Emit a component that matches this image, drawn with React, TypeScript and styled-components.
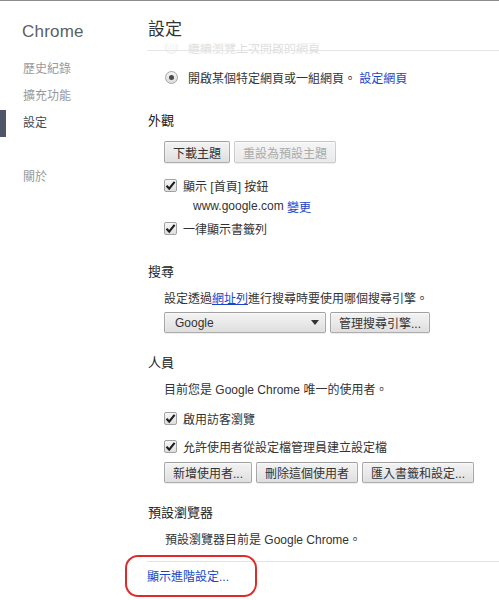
import React from "react";
import styled, { createGlobalStyle, css } from "styled-components";

const GlobalStyle = createGlobalStyle`
  html, body { margin: 0; padding: 0; background: #fff; }
  body {
    font-family: "Liberation Sans", "Noto Sans CJK TC", sans-serif;
    font-size: 12px;
    color: #303942;
  }
  * { box-sizing: border-box; }
`;

const FONT = `"Liberation Sans", "Noto Sans CJK TC", sans-serif`;

const Page = styled.div`
  width: 499px;
  height: 600px;
  overflow: hidden;
  border-top: 1px solid #8c8c8c;
  display: flex;
  background: #fff;
`;

const Sidebar = styled.nav`
  width: 147px;
  flex: none;
  padding-top: 21px;
  display: flex;
  flex-direction: column;
`;

const Brand = styled.div`
  height: 20px;
  line-height: 20px;
  padding-left: 22px;
  font-size: 17px;
  color: #5a5f66;
  font-family: ${FONT};
  letter-spacing: 0.2px;
`;

const NavList = styled.ul`
  list-style: none;
  margin: 14px 0 0;
  padding: 0;
`;

const NavItem = styled.li<{ $active?: boolean; $gapBefore?: boolean }>`
  height: 27px;
  line-height: 27px;
  font-size: 12px;
  padding-left: 23px;
  color: #999;
  margin-top: ${(p) => (p.$gapBefore ? "27px" : "0")};
  ${(p) =>
    p.$active &&
    css`
      color: #444a53;
      border-left: 6px solid #4e5668;
      padding-left: 17px;
    `}
`;

const Main = styled.main`
  position: relative;
  flex: 1;
  min-width: 0;
  padding-top: 36px;
`;

const HeaderOverlay = styled.header`
  position: absolute;
  top: 0;
  left: 0;
  right: 0;
  height: 54px;
  padding-top: 19px;
  background:
    linear-gradient(#e6e6e6, #e6e6e6) 0 49px / 100% 1px no-repeat,
    linear-gradient(
      to bottom,
      #fff 0,
      #fff 42px,
      rgba(255, 255, 255, 0.8) 43px,
      rgba(255, 255, 255, 0.8) 54px
    );
  z-index: 2;
`;

const PageTitle = styled.h1`
  margin: 0;
  padding-left: 1px;
  height: 20px;
  line-height: 20px;
  font-size: 17px;
  font-weight: normal;
  color: #333;
`;

const Row = styled.div<{ $mt?: number; $indent?: number; $h?: number }>`
  display: flex;
  align-items: center;
  height: ${(p) => p.$h ?? 20}px;
  margin-top: ${(p) => p.$mt ?? 0}px;
  padding-left: ${(p) => p.$indent ?? 17}px;
  font-size: 12px;
  color: #333;
  white-space: nowrap;
`;

const SectionTitle = styled.h3<{ $mt: number }>`
  margin: ${(p) => p.$mt}px 0 0;
  padding-left: 1px;
  height: 20px;
  line-height: 20px;
  font-size: 13px;
  font-weight: normal;
  color: #222;
`;

const Link = styled.a<{ $underline?: boolean }>`
  color: #1a45c8;
  text-decoration: ${(p) => (p.$underline ? "underline" : "none")};
  cursor: pointer;
`;

const RadioCircle = styled.span<{ $checked?: boolean }>`
  width: 13px;
  height: 13px;
  flex: none;
  border-radius: 50%;
  border: 1px solid #a6a6a6;
  background: linear-gradient(#f4f4f4, #dcdcdc);
  display: flex;
  align-items: center;
  justify-content: center;
  margin-right: 10px;
  &::after {
    content: "";
    width: 5px;
    height: 5px;
    border-radius: 50%;
    background: ${(p) => (p.$checked ? "#4a4a4a" : "transparent")};
  }
`;

const Box = styled.span`
  width: 13px;
  height: 13px;
  flex: none;
  border: 1px solid #a2a2a2;
  border-radius: 2px;
  background: linear-gradient(#f6f6f6, #dedede);
  display: flex;
  align-items: center;
  justify-content: center;
  margin-right: 6px;
`;

const Checkbox = () => (
  <Box>
    <svg width="11" height="11" viewBox="0 0 11 11">
      <path d="M1.5 5.8 L4.2 8.6 L9.6 1.8" fill="none" stroke="#1e1e1e" strokeWidth="2.1" />
    </svg>
  </Box>
);

const ButtonRow = styled.div<{ $mt: number; $h: number }>`
  display: flex;
  gap: 4px;
  margin-top: ${(p) => p.$mt}px;
  height: ${(p) => p.$h}px;
  padding-left: 17px;
`;

const Button = styled.button<{ $disabled?: boolean }>`
  height: 100%;
  padding: 0 8px;
  font-family: ${FONT};
  font-size: 12px;
  color: ${(p) => (p.$disabled ? "#aaa" : "#333")};
  border: 1px solid ${(p) => (p.$disabled ? "rgba(0,0,0,0.15)" : "rgba(0,0,0,0.28)")};
  border-radius: 2px;
  background: ${(p) =>
    p.$disabled
      ? "linear-gradient(#f5f5f5, #f1f1f1 40%, #e9e9e9)"
      : "linear-gradient(#f1f1f1, #ececec 40%, #dedede)"};
  box-shadow: 0 1px 0 rgba(0, 0, 0, 0.07), inset 0 1px 2px rgba(255, 255, 255, 0.75);
  white-space: nowrap;
  display: flex;
  align-items: center;
  justify-content: center;
`;

const Select = styled.div`
  width: 162px;
  height: 100%;
  border: 1px solid rgba(0, 0, 0, 0.28);
  border-radius: 2px;
  background: linear-gradient(#f1f1f1, #ececec 40%, #dedede);
  box-shadow: 0 1px 0 rgba(0, 0, 0, 0.07), inset 0 1px 2px rgba(255, 255, 255, 0.75);
  display: flex;
  align-items: center;
  justify-content: space-between;
  padding: 0 6px 0 10px;
  font-size: 12px;
  color: #333;
`;

const Arrow = styled.span`
  width: 0;
  height: 0;
  border-left: 4px solid transparent;
  border-right: 4px solid transparent;
  border-top: 5px solid #333;
`;

const Faded = styled(Row)`
  color: #555;
`;

const Footer = styled.div`
  position: relative;
  margin-top: 13px;
  border-top: 1px solid #e4e4e4;
  padding-top: 5px;
`;

const FooterLink = styled(Link)`
  display: block;
  height: 20px;
  line-height: 20px;
  font-size: 12px;
`;

const Annotation = styled.span`
  position: absolute;
  left: -22px;
  top: -7px;
  width: 132px;
  height: 42px;
  border: 2px solid #e02a2a;
  border-radius: 13px;
  pointer-events: none;
`;

export default function App() {
  return (
    <>
      <GlobalStyle />
      <Page>
        <Sidebar>
          <Brand>Chrome</Brand>
          <NavList>
            <NavItem>歷史紀錄</NavItem>
            <NavItem>擴充功能</NavItem>
            <NavItem $active>設定</NavItem>
            <NavItem $gapBefore>關於</NavItem>
          </NavList>
        </Sidebar>
        <Main>
          <HeaderOverlay>
            <PageTitle>設定</PageTitle>
          </HeaderOverlay>

          <Faded $indent={18}>
            <RadioCircle />
            繼續瀏覽上次開啟的網頁
          </Faded>
          <Row $mt={10} $indent={18}>
            <RadioCircle $checked />
            開啟某個特定網頁或一組網頁。&nbsp;<Link>設定網頁</Link>
          </Row>

          <SectionTitle $mt={24}>外觀</SectionTitle>
          <ButtonRow $mt={10} $h={22}>
            <Button>下載主題</Button>
            <Button $disabled>重設為預設主題</Button>
          </ButtonRow>
          <Row $mt={12}>
            <Checkbox />
            顯示 [首頁] 按鈕
          </Row>
          <Row $mt={1} $indent={46}>
            www.google.com&nbsp;<Link>變更</Link>
          </Row>
          <Row $mt={2}>
            <Checkbox />
            一律顯示書籤列
          </Row>

          <SectionTitle $mt={24}>搜尋</SectionTitle>
          <Row $mt={5}>
            設定透過<Link $underline>網址列</Link>進行搜尋時要使用哪個搜尋引擎。
          </Row>
          <ButtonRow $mt={5} $h={21}>
            <Select>
              <span>Google</span>
              <Arrow />
            </Select>
            <Button>管理搜尋引擎...</Button>
          </ButtonRow>

          <SectionTitle $mt={20}>人員</SectionTitle>
          <Row $mt={5}>目前您是 Google Chrome 唯一的使用者。</Row>
          <Row $mt={10}>
            <Checkbox />
            啟用訪客瀏覽
          </Row>
          <Row $mt={8}>
            <Checkbox />
            允許使用者從設定檔管理員建立設定檔
          </Row>
          <ButtonRow $mt={6} $h={21}>
            <Button>新增使用者...</Button>
            <Button>刪除這個使用者</Button>
            <Button>匯入書籤和設定...</Button>
          </ButtonRow>

          <SectionTitle $mt={20}>預設瀏覽器</SectionTitle>
          <Row $mt={5} $indent={18}>預設瀏覽器目前是 Google Chrome。</Row>

          <Footer>
            <FooterLink>顯示進階設定...</FooterLink>
            <Annotation />
          </Footer>
        </Main>
      </Page>
    </>
  );
}
